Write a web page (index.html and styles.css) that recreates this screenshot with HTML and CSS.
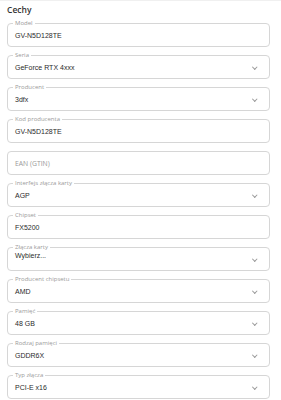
FILE: index.html
```html
<!DOCTYPE html>
<html lang="pl">
<head>
    <meta charset="UTF-8">
    <meta name="viewport" content="width=device-width, initial-scale=1.0">
    <title>Cechy</title>
    <link rel="stylesheet" href="styles.css">
</head>
<body>
<div class="container">
    <h2>Cechy</h2>

    <div class="field">
        <span class="field-label">Model</span>
        <span class="field-value">GV-N5D128TE</span>
    </div>
    <div class="field select">
        <span class="field-label">Seria</span>
        <span class="field-value">GeForce RTX 4xxx</span>
        <span class="chevron"></span>
    </div>
    <div class="field select">
        <span class="field-label">Producent</span>
        <span class="field-value">3dfx</span>
        <span class="chevron"></span>
    </div>
    <div class="field">
        <span class="field-label">Kod producenta</span>
        <span class="field-value">GV-N5D128TE</span>
    </div>
    <div class="field">
        <span class="field-value placeholder">EAN (GTIN)</span>
    </div>
    <div class="field select">
        <span class="field-label">Interfejs złącza karty</span>
        <span class="field-value">AGP</span>
        <span class="chevron"></span>
    </div>
    <div class="field">
        <span class="field-label">Chipset</span>
        <span class="field-value">FX5200</span>
    </div>
    <div class="field select top">
        <span class="field-label">Złącza karty</span>
        <span class="field-value">Wybierz...</span>
        <span class="chevron"></span>
    </div>
    <div class="field select">
        <span class="field-label">Producent chipsetu</span>
        <span class="field-value">AMD</span>
        <span class="chevron"></span>
    </div>
    <div class="field select">
        <span class="field-label">Pamięć</span>
        <span class="field-value">48 GB</span>
        <span class="chevron"></span>
    </div>
    <div class="field select">
        <span class="field-label">Rodzaj pamięci</span>
        <span class="field-value">GDDR6X</span>
        <span class="chevron"></span>
    </div>
    <div class="field select">
        <span class="field-label">Typ złącza</span>
        <span class="field-value">PCI-E x16</span>
        <span class="chevron"></span>
    </div>
</div>
</body>
</html>
```

FILE: styles.css
```css
:root {
    --text-primary: #2b2b2b;
    --text-secondary: #9a9a9a;
    --border-color: #d6d6d6;
}

body {
    font-family: 'Open Sans', 'Liberation Sans', sans-serif;
    background-color: #ffffff;
    color: var(--text-primary);
    margin: 0;
    padding: 0;
}

.container {
    border-top: 1px solid #f0f0f0;
    padding: 0 11px 0 7px;
    display: flex;
    flex-direction: column;
    gap: 8px;
}

h2 {
    font-size: 8.5px;
    font-weight: 600;
    margin: 0;
    height: 14px;
    line-height: 18px;
    color: #333;
}

.field {
    position: relative;
    height: 24px;
    box-sizing: border-box;
    border: 1px solid var(--border-color);
    border-radius: 4px;
    display: flex;
    align-items: center;
    padding: 0 7px;
}

.field-label {
    position: absolute;
    top: -5px;
    left: 5px;
    padding: 0 2px;
    background-color: #fff;
    font-size: 6px;
    line-height: 8px;
    color: var(--text-secondary);
}

.field-value {
    font-family: 'Liberation Sans', Arial, sans-serif;
    font-size: 7px;
    color: var(--text-primary);
}

.field-value.placeholder {
    font-family: 'Open Sans', sans-serif;
    font-size: 6.8px;
    color: var(--text-secondary);
}

.field.top {
    align-items: flex-start;
    padding-top: 4px;
}

.chevron {
    position: absolute;
    right: 13px;
    top: 9px;
    width: 2.5px;
    height: 2.5px;
    border-right: 1px solid #999;
    border-bottom: 1px solid #999;
    transform: rotate(45deg);
}
```
